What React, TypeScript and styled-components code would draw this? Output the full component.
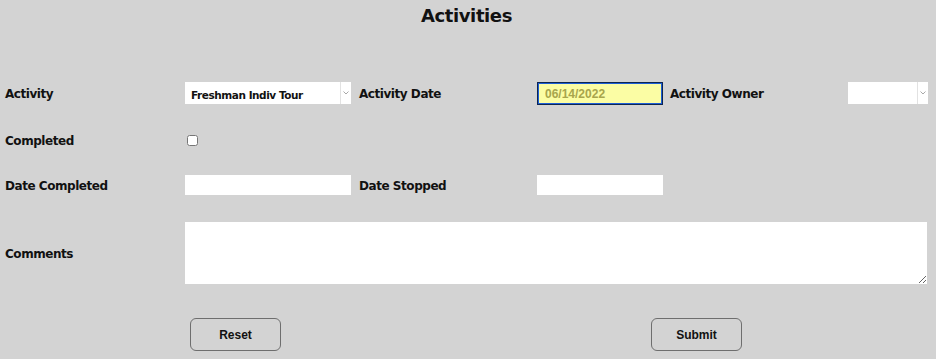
import React, { useState } from "react";
import styled, { createGlobalStyle } from "styled-components";

const GlobalStyle = createGlobalStyle`
  html, body {
    margin: 0;
    padding: 0;
    background: #d3d3d3;
  }
  body {
    font-family: "Liberation Sans", Arial, sans-serif;
  }
`;

const Page = styled.div`
  width: 936px;
  height: 359px;
  background: #d3d3d3;
  padding: 0 8px 0 5px;
  box-sizing: border-box;
  overflow: hidden;
`;

const Title = styled.h1`
  margin: 0;
  text-align: center;
  font-family: "DejaVu Sans", sans-serif;
  font-size: 18px;
  font-weight: bold;
  line-height: 32px;
  color: #111;
  letter-spacing: -0.4px;
`;

const Row = styled.div<{ $top: number; $height: number }>`
  display: grid;
  grid-template-columns: 180px 174px 178px 133px 178px 80px;
  align-items: center;
  margin-top: ${({ $top }) => $top}px;
  height: ${({ $height }) => $height}px;
`;

const Label = styled.label`
  padding-top: 2px;
  font-family: "DejaVu Sans", sans-serif;
  font-size: 12px;
  font-weight: bold;
  color: #111;
  letter-spacing: -0.45px;
`;

const SelectBox = styled.div<{ $width: number }>`
  display: flex;
  width: ${({ $width }) => $width}px;
  height: 22px;
  background: #fff;
`;

const Select = styled.select`
  appearance: none;
  flex: 1;
  min-width: 0;
  border: none;
  background: transparent;
  padding: 3px 0 0 6px;
  font-family: "DejaVu Sans", sans-serif;
  font-size: 10.5px;
  font-weight: bold;
  letter-spacing: -0.45px;
  color: #111;
  outline: none;
`;

const ArrowCell = styled.div`
  width: 10px;
  border-left: 1px solid #e2e2e2;
  display: flex;
  align-items: center;
  justify-content: center;
`;

const TextInput = styled.input<{ $width: number }>`
  width: ${({ $width }) => $width}px;
  height: 20px;
  box-sizing: border-box;
  border: none;
  background: #fff;
  padding: 0 6px;
  font-size: 12px;
  outline: none;
`;

const DateInput = styled.input`
  width: 126px;
  height: 23px;
  box-sizing: border-box;
  border: 1px solid #0c2550;
  box-shadow: inset 0 0 0 1px #1d5ed6;
  background: #fbfda4;
  padding: 1px 0 0 7px;
  font-family: "Liberation Sans", Arial, sans-serif;
  font-size: 12px;
  font-weight: bold;
  color: #a8a54c;
  outline: none;
`;

const Check = styled.input`
  width: 11px;
  height: 11px;
  margin: 0 0 0 2px;
`;

const CommentBox = styled.textarea`
  grid-column: 2 / 7;
  width: 742px;
  height: 62px;
  box-sizing: border-box;
  border: none;
  background: #fff;
  resize: both;
  outline: none;
`;

const ButtonRow = styled.div`
  display: flex;
  margin-top: 34px;
  padding-left: 185px;
`;

const Button = styled.button<{ $gap?: number }>`
  width: 91px;
  height: 33px;
  margin-left: ${({ $gap }) => $gap ?? 0}px;
  border: 1px solid #6e6e6e;
  border-radius: 6px;
  background: #d3d3d3;
  font-family: "Liberation Sans", Arial, sans-serif;
  font-size: 12px;
  font-weight: bold;
  color: #111;
  cursor: pointer;
`;

const Chevron = () => (
  <svg width="6" height="4" viewBox="0 0 6 4">
    <path d="M0.5 0.5 L3 3 L5.5 0.5" fill="none" stroke="#a8a8a8" strokeWidth="1" />
  </svg>
);

export default function App() {
  const [date, setDate] = useState("06/14/2022");
  return (
    <Page>
      <GlobalStyle />
      <Title>Activities</Title>
      <Row $top={49} $height={24}>
        <Label>Activity</Label>
        <SelectBox $width={166}>
          <Select defaultValue="tour">
            <option value="tour">Freshman Indiv Tour</option>
          </Select>
          <ArrowCell>
            <Chevron />
          </ArrowCell>
        </SelectBox>
        <Label>Activity Date</Label>
        <DateInput value={date} onChange={(e) => setDate(e.target.value)} />
        <Label>Activity Owner</Label>
        <SelectBox $width={80}>
          <Select defaultValue="">
            <option value=""></option>
          </Select>
          <ArrowCell>
            <Chevron />
          </ArrowCell>
        </SelectBox>
      </Row>
      <Row $top={23} $height={24}>
        <Label>Completed</Label>
        <Check type="checkbox" />
      </Row>
      <Row $top={23} $height={20}>
        <Label>Date Completed</Label>
        <TextInput $width={166} />
        <Label>Date Stopped</Label>
        <TextInput $width={126} />
      </Row>
      <Row $top={27} $height={62}>
        <Label>Comments</Label>
        <CommentBox />
      </Row>
      <ButtonRow>
        <Button>Reset</Button>
        <Button $gap={370}>Submit</Button>
      </ButtonRow>
    </Page>
  );
}
